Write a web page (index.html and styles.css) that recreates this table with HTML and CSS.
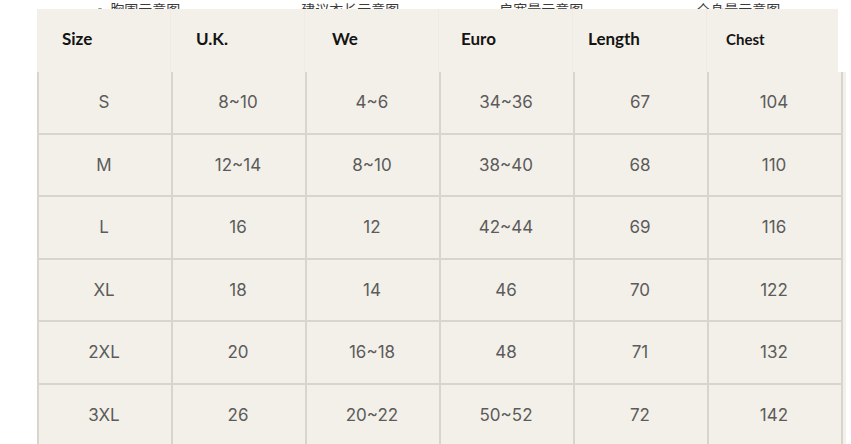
FILE: index.html
```html
<!DOCTYPE html>
<html lang="zh">
<head>
<meta charset="utf-8">
<title>Size Chart</title>
<link rel="stylesheet" href="styles.css">
</head>
<body>
<div class="captions">
  <span class="cap cap1">◦ 胸围示意图</span>
  <span class="cap cap2">建议衣长示意图</span>
  <span class="cap cap3">肩宽量示意图</span>
  <span class="cap cap4">全身量示意图</span>
</div>
<div class="chart">
  <div class="head">
    <div class="hcell h-size">Size</div>
    <div class="hcell h-uk">U.K.</div>
    <div class="hcell h-we">We</div>
    <div class="hcell h-euro">Euro</div>
    <div class="hcell h-len">Length</div>
    <div class="hcell h-chest">Chest</div>
  </div>
  <div class="body">
    <div class="cell">S</div><div class="cell">8~10</div><div class="cell">4~6</div><div class="cell">34~36</div><div class="cell">67</div><div class="cell last">104</div>
    <div class="cell">M</div><div class="cell">12~14</div><div class="cell">8~10</div><div class="cell">38~40</div><div class="cell">68</div><div class="cell last">110</div>
    <div class="cell">L</div><div class="cell">16</div><div class="cell">12</div><div class="cell">42~44</div><div class="cell">69</div><div class="cell last">116</div>
    <div class="cell">XL</div><div class="cell">18</div><div class="cell">14</div><div class="cell">46</div><div class="cell">70</div><div class="cell last">122</div>
    <div class="cell">2XL</div><div class="cell">20</div><div class="cell">16~18</div><div class="cell">48</div><div class="cell">71</div><div class="cell last">132</div>
    <div class="cell">3XL</div><div class="cell">26</div><div class="cell">20~22</div><div class="cell">50~52</div><div class="cell">72</div><div class="cell last">142</div>
  </div>
</div>
</body>
</html>
```
FILE: styles.css
```css
html, body {
  margin: 0;
  padding: 0;
  background: #ffffff;
  overflow: hidden;
}

.captions {
  height: 9px;
  overflow: hidden;
  display: flex;
  align-items: flex-end;
  font-family: "Noto Sans CJK SC", sans-serif;
  font-size: 14px;
  line-height: 14px;
  color: #3a3a3a;
  white-space: nowrap;
}

.cap {
  display: block;
  margin-bottom: -7px;
}

.cap1 { margin-left: 93px; }
.cap2 { margin-left: 121px; }
.cap3 { margin-left: 100px; }
.cap4 { margin-left: 113px; }

.chart {
  margin-left: 37px;
  width: 809px;
}

.head {
  display: grid;
  grid-template-columns: repeat(6, 134px);
  height: 63px;
  width: 801px;
  background: #f3f0e9;
}

.hcell {
  display: flex;
  align-items: center;
  padding-bottom: 4px;
  font-family: "Lato", "Liberation Sans", sans-serif;
  font-weight: 700;
  font-size: 17px;
  color: #141414;
  border-right: 1px solid #efebe4;
}

.h-size { padding-left: 25px; }
.h-uk { padding-left: 25px; }
.h-we { padding-left: 27px; }
.h-euro { padding-left: 22px; }
.h-len { padding-left: 15px; }
.h-chest { padding-left: 19px; font-size: 15px; border-right: none; }

.body {
  display: grid;
  grid-template-columns: repeat(5, 134px) 139px;
  grid-auto-rows: 62.5px;
  background: #f3f0e9;
}

.cell {
  box-sizing: border-box;
  display: flex;
  align-items: center;
  justify-content: center;
  border-left: 2px solid #d8d5cf;
  border-bottom: 2px solid #d8d5cf;
  padding-right: 2px;
  font-family: "Inter", "Roboto", sans-serif;
  font-size: 17px;
  color: #5b5b5b;
}

.cell.last {
  border-right: 2px solid #d8d5cf;
  margin-right: 3px;
}
```
